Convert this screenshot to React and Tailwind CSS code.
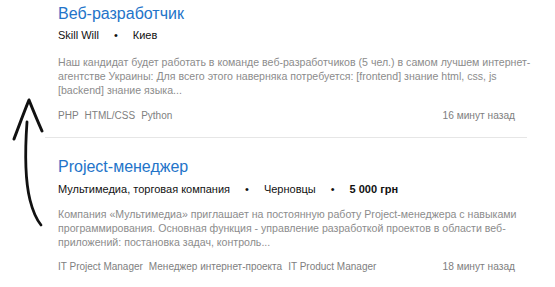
export default function App() {
  const font = { fontFamily: '"Liberation Sans", Arial, sans-serif' };
  return (
    <div className="relative w-[555px] h-[287px] overflow-hidden bg-white" style={font}>
      <div className="ml-[45px] w-[482px]">
        <div className="pl-[13px] pr-[12px] pt-[4px] pb-[13px] border-b border-[#e6e6e6]">
          <div className="text-[16px] leading-[20px] text-[#2374c9]">Веб-разработчик</div>
          <div className="mt-[3px] flex items-center text-[11px] leading-[16px] text-[#111]">
            <span>Skill Will</span>
            <span className="mx-[15px]">•</span>
            <span>Киев</span>
          </div>
          <div className="mt-[12px] text-[10.6px] leading-[14px] text-[#8c8c8c] whitespace-nowrap">
            <div>Наш кандидат будет работать в команде веб-разработчиков (5 чел.) в самом лучшем интернет-</div>
            <div>агентстве Украины: Для всего этого наверняка потребуется: [frontend] знание html, css, js</div>
            <div>[backend] знание языка...</div>
          </div>
          <div className="mt-[11px] flex items-center justify-between text-[10px] leading-[16px] text-[#808080]">
            <div className="flex gap-[6px]">
              <span>PHP</span>
              <span>HTML/CSS</span>
              <span>Python</span>
            </div>
            <span className="text-[10.2px]">16 минут назад</span>
          </div>
        </div>
        <div className="pl-[13px] pr-[12px] pt-[19px]">
          <div className="text-[16px] leading-[20px] text-[#2374c9]">Project-менеджер</div>
          <div className="mt-[4px] flex items-center text-[11px] leading-[16px] text-[#111]">
            <span>Мультимедиа, торговая компания</span>
            <span className="mx-[15px]">•</span>
            <span>Черновцы</span>
            <span className="mx-[15px]">•</span>
            <span className="font-bold">5 000 грн</span>
          </div>
          <div className="mt-[10px] text-[10.6px] leading-[14px] text-[#8c8c8c] whitespace-nowrap">
            <div>Компания «Мультимедиа» приглашает на постоянную работу Project-менеджера с навыками</div>
            <div>программирования. Основная функция - управление разработкой проектов в области веб-</div>
            <div>приложений: постановка задач, контроль...</div>
          </div>
          <div className="mt-[10px] flex items-center justify-between text-[10px] leading-[16px] text-[#808080]">
            <div className="flex gap-[6px]">
              <span>IT Project Manager</span>
              <span>Менеджер интернет-проекта</span>
              <span>IT Product Manager</span>
            </div>
            <span className="text-[10.2px]">18 минут назад</span>
          </div>
        </div>
      </div>
      <svg className="absolute left-0 top-0" width="60" height="287" viewBox="0 0 60 287" fill="none" stroke="#111" strokeLinecap="round" strokeLinejoin="round">
        <path d="M14 139 C19 126 24 112 29 100 C33 110 38 122 42 131" strokeWidth="3" />
        <path d="M27 122 C25 150 25 180 30 200 C33 212 37 220 41 225" strokeWidth="2.8" />
      </svg>
    </div>
  );
}
